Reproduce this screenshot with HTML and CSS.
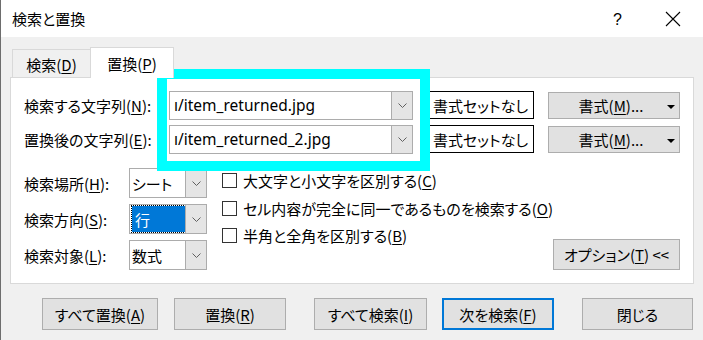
FILE: index.html
```html
<!DOCTYPE html>
<html lang="ja">
<head>
    <meta charset="UTF-8">
    <title>検索と置換</title>
    <link rel="stylesheet" href="styles.css">
</head>
<body>

<div class="window">
    <div class="titlebar">
        <span class="title">検索と置換</span>
        <span class="help">?</span>
        <svg class="close" width="16" height="16" viewBox="0 0 16 16"><path d="M1 1 L15 15 M15 1 L1 15" stroke="#000" stroke-width="1.1" fill="none"/></svg>
    </div>

    <div class="content">
        <div class="tabs">
            <div class="tab">検索(<u>D</u>)</div>
            <div class="tab active">置換(<u>P</u>)</div>
        </div>

        <div class="panel">
            <div class="find-row">
                <span class="label">検索する文字列(<u>N</u>):</span>
                <div class="combo wide">
                    <div class="combo-text"><span class="path">ı/item_returned.jpg</span></div>
                    <div class="combo-btn"><svg width="9" height="5" viewBox="0 0 9 5"><path d="M0.5 0.5 L4.5 4.5 L8.5 0.5" stroke="#606060" fill="none"/></svg></div>
                </div>
                <div class="no-format">書式セットなし</div>
                <div class="btn format">書式(<u>M</u>)...<svg class="caret" width="8" height="4" viewBox="0 0 8 4"><path d="M0 0 H8 L4 4 Z" fill="#000"/></svg></div>
            </div>
            <div class="find-row">
                <span class="label">置換後の文字列(<u>E</u>):</span>
                <div class="combo wide">
                    <div class="combo-text"><span class="path">ı/item_returned_2.jpg</span></div>
                    <div class="combo-btn"><svg width="9" height="5" viewBox="0 0 9 5"><path d="M0.5 0.5 L4.5 4.5 L8.5 0.5" stroke="#606060" fill="none"/></svg></div>
                </div>
                <div class="no-format">書式セットなし</div>
                <div class="btn format">書式(<u>M</u>)...<svg class="caret" width="8" height="4" viewBox="0 0 8 4"><path d="M0 0 H8 L4 4 Z" fill="#000"/></svg></div>
            </div>

            <div class="options">
                <div class="option-fields">
                    <div class="field">
                        <span class="field-label">検索場所(<u>H</u>):</span>
                        <div class="combo small">
                            <div class="combo-text">シート</div>
                            <div class="combo-btn"><svg width="9" height="5" viewBox="0 0 9 5"><path d="M0.5 0.5 L4.5 4.5 L8.5 0.5" stroke="#606060" fill="none"/></svg></div>
                        </div>
                    </div>
                    <div class="field">
                        <span class="field-label">検索方向(<u>S</u>):</span>
                        <div class="combo small">
                            <div class="combo-text"><span class="selected">行</span></div>
                            <div class="combo-btn"><svg width="9" height="5" viewBox="0 0 9 5"><path d="M0.5 0.5 L4.5 4.5 L8.5 0.5" stroke="#606060" fill="none"/></svg></div>
                        </div>
                    </div>
                    <div class="field">
                        <span class="field-label">検索対象(<u>L</u>):</span>
                        <div class="combo small">
                            <div class="combo-text">数式</div>
                            <div class="combo-btn"><svg width="9" height="5" viewBox="0 0 9 5"><path d="M0.5 0.5 L4.5 4.5 L8.5 0.5" stroke="#606060" fill="none"/></svg></div>
                        </div>
                    </div>
                </div>

                <div class="checks">
                    <label class="check"><span class="box"></span><span>大文字と小文字を区別する(<u>C</u>)</span></label>
                    <label class="check"><span class="box"></span><span>セル内容が完全に同一であるものを検索する(<u>O</u>)</span></label>
                    <label class="check"><span class="box"></span><span>半角と全角を区別する(<u>B</u>)</span></label>
                </div>

                <div class="btn options-btn">オプション(<u>T</u>) &lt;&lt;</div>
            </div>
        </div>

        <div class="actions">
            <div class="btn act-replace-all">すべて置換(<u>A</u>)</div>
            <div class="btn act-replace">置換(<u>R</u>)</div>
            <div class="btn act-find-all">すべて検索(<u>I</u>)</div>
            <div class="btn act-find-next focused">次を検索(<u>F</u>)</div>
            <div class="btn act-close">閉じる</div>
        </div>
    </div>

    <div class="highlight"></div>
</div>

</body>
</html>
```

FILE: styles.css
```css
* {
    box-sizing: border-box;
}
body {
    margin: 0;
    font-family: "Noto Sans CJK JP", "Noto Sans", sans-serif;
    font-size: 15px;
    font-feature-settings: "palt";
    color: #000;
    background: #f0f0f0;
}
u {
    text-decoration-thickness: 1px;
    text-underline-offset: 2px;
}
.window {
    position: relative;
    width: 703px;
    height: 340px;
    border-left: 1px solid #6d6d6d;
    overflow: hidden;
}
.titlebar {
    height: 37px;
    background: #fff;
    display: flex;
    align-items: center;
    padding-left: 11px;
}
.title {
    flex: 1;
    font-size: 15px;
}
.help {
    font-family: "Liberation Sans", sans-serif;
    font-size: 16px;
    margin-right: 43px;
    margin-top: 2px;
}
.close {
    margin-right: 22px;
}
.content {
    background: #f0f0f0;
    padding: 10px 9px 0 9px;
    height: 303px;
}
.tabs {
    display: flex;
    align-items: flex-end;
    height: 30px;
    padding-left: 2px;
}
.tab {
    height: 28px;
    width: 78px;
    border: 1px solid #d9d9d9;
    border-bottom: none;
    border-right: none;
    display: flex;
    align-items: center;
    justify-content: center;
    padding-top: 1px;
}
.tab.active {
    height: 31px;
    width: 84px;
    margin-bottom: -1px;
    background: #fff;
    border-right: 1px solid #d9d9d9;
    position: relative;
    z-index: 1;
    padding-top: 0;
}
.panel {
    background: #fff;
    border: 1px solid #d9d9d9;
    width: 684px;
    height: 207px;
    padding: 13px 0 0 13px;
}
.find-row {
    display: flex;
    align-items: center;
    height: 28px;
    margin-bottom: 6px;
}
.label {
    width: 145px;
}
.combo {
    display: flex;
    border: 1px solid #acacac;
    background: #fff;
}
.combo.wide {
    width: 244px;
    height: 29px;
}
.combo-text {
    flex: 1;
    overflow: hidden;
    white-space: nowrap;
    display: flex;
    align-items: center;
    padding-left: 4px;
}
.path {
    font-family: "Noto Sans", sans-serif;
    font-size: 15.5px;
}
.combo-btn {
    width: 21px;
    background: #e5e5e5;
    border-left: 1px solid #acacac;
    display: flex;
    align-items: center;
    justify-content: center;
}
.no-format {
    width: 107px;
    height: 28px;
    margin-left: 14px;
    border: 1px solid #000;
    display: flex;
    align-items: center;
    justify-content: center;
}
.btn {
    background: #e1e1e1;
    border: 1px solid #adadad;
    display: flex;
    align-items: center;
    justify-content: center;
    white-space: nowrap;
}
.format {
    width: 132px;
    height: 27px;
    margin-left: 14px;
    position: relative;
    padding-right: 6px;
}
.caret {
    position: absolute;
    right: 4px;
    top: 12px;
}
.options {
    display: flex;
    padding-top: 9px;
}
.option-fields {
    display: flex;
    flex-direction: column;
    gap: 6px;
    flex-shrink: 0;
}
.field {
    display: flex;
    align-items: center;
    height: 30px;
}
.field-label {
    width: 105px;
}
.combo.small {
    width: 78px;
    height: 30px;
}
.combo.small .combo-text {
    padding-left: 2px;
}
.selected {
    display: flex;
    align-items: center;
    width: 54px;
    height: 26px;
    background: #0078d7;
    color: #fff;
    outline: 1px dotted #000;
    padding-left: 3px;
}
.checks {
    display: flex;
    flex-direction: column;
    margin-left: 15px;
    margin-top: -1px;
    flex-shrink: 0;
}
.check {
    display: flex;
    align-items: center;
    height: 27.5px;
    white-space: nowrap;
}
.box {
    width: 15px;
    height: 15px;
    border: 1px solid #333;
    background: #fff;
    margin-right: 6px;
}
.options-btn {
    width: 131px;
    height: 31px;
    margin-left: auto;
    margin-right: 13px;
    align-self: flex-end;
}
.actions {
    display: flex;
    margin-top: 14px;
    height: 32px;
}
.actions .btn {
    height: 32px;
}
.act-replace-all {
    width: 116px;
    margin-left: 32px;
}
.act-replace {
    width: 112px;
    margin-left: 16px;
}
.act-find-all {
    width: 113px;
    margin-left: 28px;
}
.act-find-next {
    width: 112px;
    margin-left: 15px;
}
.act-close {
    width: 111px;
    margin-left: 28px;
}
.focused {
    border: 2px solid #0078d7;
}
.highlight {
    position: absolute;
    left: 156px;
    top: 69px;
    width: 273px;
    height: 102px;
    border: 10px solid #00ffff;
}
```
